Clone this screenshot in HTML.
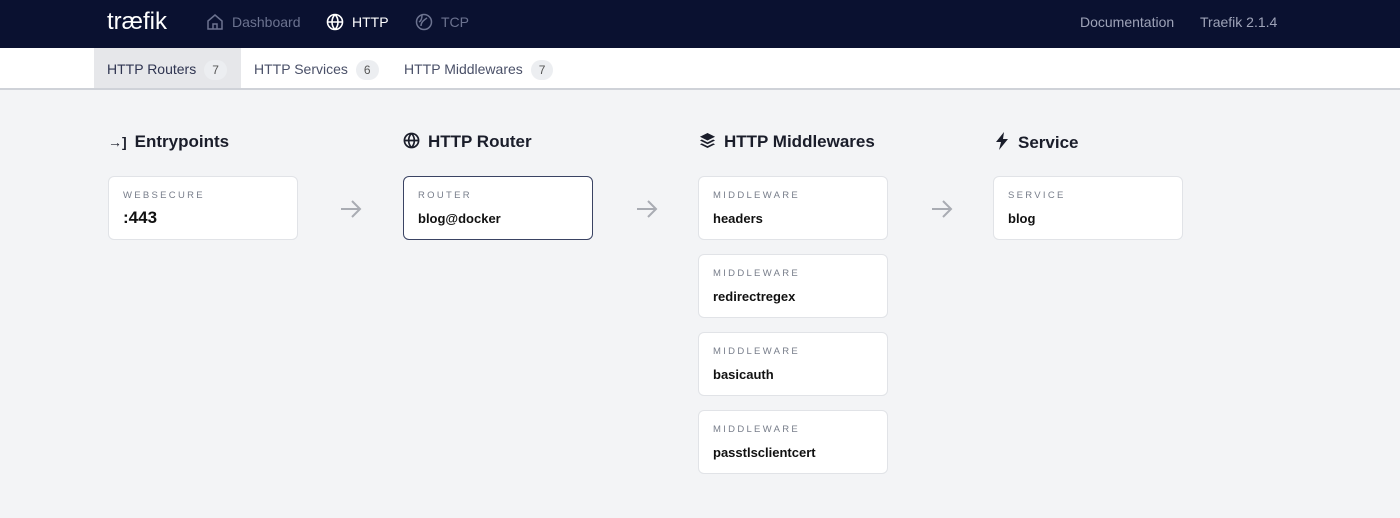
<!DOCTYPE html>
<html><head><style>
*{margin:0;padding:0;box-sizing:border-box}
body{width:1400px;height:518px;background:#f3f4f6;font-family:"Liberation Sans",sans-serif;position:relative;overflow:hidden}
.hdr{position:absolute;left:0;top:0;width:1400px;height:48px;background:#0a1130}
.hdr span{position:absolute;top:14px;font-size:14px;color:#6c7390}
.sub{position:absolute;left:0;top:48px;width:1400px;height:42px;background:#fff;border-bottom:2px solid #cfd2d8}
.tab{position:absolute;top:0;height:40px;line-height:42px;font-size:14px;color:#4a5068;padding-left:13px}
.badge{display:inline-block;background:#eceef1;border-radius:10px;font-size:12px;padding:0 8px;line-height:20px;margin-left:8px;color:#555}
.title{position:absolute;top:132px;font-size:17px;font-weight:bold;color:#1a1d2a}
.card{position:absolute;width:190px;height:64px;background:#fff;border:1px solid #e1e3e7;border-radius:6px;padding:13px 14px}
.card .l{font-size:9.5px;letter-spacing:2.3px;color:#777d8a}
.card .v{font-size:13px;font-weight:bold;color:#111;margin-top:10px}
.arr{position:absolute;top:197px}
</style></head><body>
<div class="hdr">
<span style="left:107px;top:8px;font-size:24px;color:#fff">træfik</span>
<svg style="position:absolute;left:206px;top:13px" width="18" height="18" viewBox="0 0 18 18" fill="none" stroke="#6c7390" stroke-width="1.5"><path d="M2 8L9 2l7 6v8H2z"/><path d="M7 16v-5h4v5"/></svg>
<span style="left:232px">Dashboard</span>
<svg style="position:absolute;left:326px;top:13px" width="18" height="18" viewBox="0 0 18 18" fill="none" stroke="#fff" stroke-width="1.6"><circle cx="9" cy="9" r="7.5"/><path d="M1.5 9h15M9 1.5c-4 4-4 11 0 15M9 1.5c4 4 4 11 0 15"/></svg>
<span style="left:352px;color:#fff">HTTP</span>
<svg style="position:absolute;left:415px;top:13px" width="18" height="18" viewBox="0 0 18 18" fill="none" stroke="#6c7390" stroke-width="1.5"><circle cx="9" cy="9" r="7.5"/><path d="M6 13c0-4 3-6 6-8M4 9c2-1 3-4 3-7"/></svg>
<span style="left:441px">TCP</span>
<span style="left:1080px;color:#9ea3b8">Documentation</span>
<span style="left:1200px;color:#9ea3b8">Traefik 2.1.4</span>
</div>
<div class="sub">
<div class="tab" style="left:94px;width:147px;background:#e6e7ea;color:#2e3450">HTTP Routers<span class="badge">7</span></div>
<div class="tab" style="left:241px">HTTP Services<span class="badge">6</span></div>
<div class="tab" style="left:391px">HTTP Middlewares<span class="badge">7</span></div>
</div>
<div class="title" style="left:108px"><span style="font-size:14px;margin-right:8px">→]</span>Entrypoints</div>
<div class="title" style="left:403px"><svg width="17" height="17" viewBox="0 0 18 18" fill="none" stroke="#1a1d2a" stroke-width="1.8" style="vertical-align:-2px;margin-right:8px"><circle cx="9" cy="9" r="7.5"/><path d="M1.5 9h15M9 1.5c-4 4-4 11 0 15M9 1.5c4 4 4 11 0 15"/></svg>HTTP Router</div>
<div class="title" style="left:699px"><svg width="17" height="17" viewBox="0 0 18 18" fill="#1a1d2a" style="vertical-align:-2px;margin-right:8px"><path d="M9 1l8 4-8 4-8-4z"/><path d="M1 9l2-1 6 3 6-3 2 1-8 4z"/><path d="M1 13l2-1 6 3 6-3 2 1-8 4z"/></svg>HTTP Middlewares</div>
<div class="title" style="left:995px"><svg width="14" height="18" viewBox="0 0 14 18" fill="#1a1d2a" style="vertical-align:-2px;margin-right:9px"><path d="M9 0L1 10h5l-2 8 9-11H8z"/></svg>Service</div>
<div class="card" style="left:108px;top:176px"><div class="l">WEBSECURE</div><div class="v" style="font-size:17px;margin-top:7px">:443</div></div>
<div class="card" style="left:403px;top:176px;border:1.5px solid #3a4363"><div class="l">ROUTER</div><div class="v">blog@docker</div></div>
<div class="card" style="left:698px;top:176px"><div class="l">MIDDLEWARE</div><div class="v">headers</div></div>
<div class="card" style="left:698px;top:254px"><div class="l">MIDDLEWARE</div><div class="v">redirectregex</div></div>
<div class="card" style="left:698px;top:332px"><div class="l">MIDDLEWARE</div><div class="v">basicauth</div></div>
<div class="card" style="left:698px;top:410px"><div class="l">MIDDLEWARE</div><div class="v">passtlsclientcert</div></div>
<div class="card" style="left:993px;top:176px"><div class="l">SERVICE</div><div class="v">blog</div></div>
<svg class="arr" style="left:339px" width="24" height="24" viewBox="0 0 24 24" fill="none" stroke="#a9acb3" stroke-width="2"><path d="M2 12h19M13 4l8 8-8 8"/></svg>
<svg class="arr" style="left:635px" width="24" height="24" viewBox="0 0 24 24" fill="none" stroke="#a9acb3" stroke-width="2"><path d="M2 12h19M13 4l8 8-8 8"/></svg>
<svg class="arr" style="left:930px" width="24" height="24" viewBox="0 0 24 24" fill="none" stroke="#a9acb3" stroke-width="2"><path d="M2 12h19M13 4l8 8-8 8"/></svg>
</body></html>
